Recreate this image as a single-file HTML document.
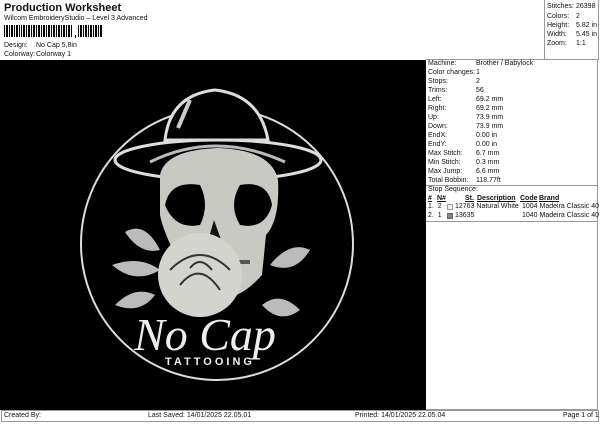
<!DOCTYPE html>
<html><head><meta charset="utf-8"><style>
*{margin:0;padding:0;box-sizing:border-box}
body{width:600px;height:424px;background:#fff;font-family:"Liberation Sans",sans-serif;color:#111;position:relative;overflow:hidden}
.a{position:absolute;white-space:nowrap;font-size:7px;line-height:8px}
#img{position:absolute;left:0;top:60px;width:426px;height:350px;background:#000}
#panel{position:absolute;left:426px;top:59px;width:172px;height:351px;border:1px solid #999;border-left:none}
#tr{position:absolute;left:544px;top:0;width:55px;height:60px;border-left:1px solid #999;border-right:1px solid #999}
.foot{position:absolute;left:1px;top:410px;width:598px;height:12px;border:1px solid #999}
u{text-decoration:underline;font-weight:bold}
</style></head><body>
<div class="a" style="left:4px;top:2px;font-size:11px;line-height:13px;font-weight:bold">Production Worksheet</div>
<div class="a" style="left:4px;top:15px">Wilcom EmbroideryStudio – Level 3 Advanced</div>
<svg style="position:absolute;left:4px;top:25px" width="100" height="14">
<g fill="#000">
<rect x="0" y="0" width="1" height="12"/><rect x="2" y="0" width="2" height="12"/><rect x="5" y="0" width="1" height="12"/><rect x="7" y="0" width="2" height="12"/><rect x="10" y="0" width="1" height="12"/><rect x="12" y="0" width="2" height="12"/><rect x="15" y="0" width="1" height="12"/><rect x="17" y="0" width="1" height="12"/><rect x="19" y="0" width="2" height="12"/><rect x="22" y="0" width="1" height="12"/><rect x="24" y="0" width="2" height="12"/><rect x="27" y="0" width="1" height="12"/><rect x="29" y="0" width="2" height="12"/><rect x="32" y="0" width="1" height="12"/><rect x="34" y="0" width="2" height="12"/><rect x="37" y="0" width="1" height="12"/><rect x="39" y="0" width="2" height="12"/><rect x="42" y="0" width="1" height="12"/><rect x="44" y="0" width="2" height="12"/><rect x="47" y="0" width="1" height="12"/><rect x="49" y="0" width="2" height="12"/><rect x="52" y="0" width="1" height="12"/><rect x="54" y="0" width="2" height="12"/><rect x="57" y="0" width="1" height="12"/><rect x="59" y="0" width="2" height="12"/><rect x="62" y="0" width="1" height="12"/><rect x="64" y="0" width="2" height="12"/><rect x="67" y="0" width="1" height="12"/><rect x="71" y="10" width="1" height="3"/><rect x="74" y="0" width="1" height="12"/><rect x="76" y="0" width="2" height="12"/><rect x="79" y="0" width="1" height="12"/><rect x="81" y="0" width="2" height="12"/><rect x="84" y="0" width="1" height="12"/><rect x="86" y="0" width="2" height="12"/><rect x="89" y="0" width="1" height="12"/><rect x="91" y="0" width="2" height="12"/><rect x="94" y="0" width="1" height="12"/><rect x="96" y="0" width="2" height="12"/>
</g></svg>
<div class="a" style="left:4px;top:42px">Design:</div><div class="a" style="left:36px;top:42px">No Cap 5,8in</div>
<div class="a" style="left:4px;top:51px">Colorway:</div><div class="a" style="left:36px;top:51px">Colorway 1</div>
<div id="tr"></div>
<div class="a" style="left:547px;top:3px">Stitches:</div><div class="a" style="left:576px;top:3px">26398</div>
<div class="a" style="left:547px;top:13px">Colors:</div><div class="a" style="left:576px;top:13px">2</div>
<div class="a" style="left:547px;top:22px">Height:</div><div class="a" style="left:576px;top:22px">5.82 in</div>
<div class="a" style="left:547px;top:31px">Width:</div><div class="a" style="left:576px;top:31px">5.45 in</div>
<div class="a" style="left:547px;top:40px">Zoom:</div><div class="a" style="left:576px;top:40px">1:1</div>
<div id="img">
<svg width="426" height="350" viewBox="0 60 426 350">
<circle cx="217" cy="244" r="136" fill="none" stroke="#ddd" stroke-width="2"/>
<!-- hat -->
<path d="M165 140 Q170 95 215 90 Q260 95 268 140 Z" fill="#000" stroke="#ddd" stroke-width="3"/>
<path d="M178 128 L190 100" stroke="#ccc" stroke-width="4"/>
<ellipse cx="218" cy="160" rx="103" ry="20" fill="none" stroke="#ddd" stroke-width="3"/>
<path d="M150 162 Q215 130 285 162" fill="none" stroke="#bbb" stroke-width="3"/>
<!-- skull -->
<path d="M160 175 Q165 150 218 148 Q272 150 278 180 Q280 220 266 235 L262 275 Q240 300 215 300 L190 280 Q165 240 160 215 Z" fill="#c9c9c4"/>
<path d="M165 205 Q170 180 200 185 Q210 205 200 225 Q175 230 165 205Z" fill="#000"/>
<path d="M272 205 Q268 180 240 185 Q228 205 240 225 Q265 230 272 205Z" fill="#000"/>
<path d="M214 220 L206 248 L224 248 Z" fill="#111"/>
<path d="M200 262 L250 262" stroke="#555" stroke-width="4"/>
<!-- leaves -->
<path d="M125 232 Q145 220 160 250 Q140 255 125 232Z" fill="#bbb"/>
<path d="M112 265 Q140 255 160 270 Q135 285 112 265Z" fill="#bbb"/>
<path d="M115 305 Q135 285 155 295 Q140 315 115 305Z" fill="#bbb"/>
<path d="M310 250 Q290 240 270 265 Q295 275 310 250Z" fill="#bbb"/>
<path d="M300 310 Q280 290 262 305 Q280 325 300 310Z" fill="#bbb"/>
<!-- rose -->
<circle cx="200" cy="275" r="42" fill="#d4d4cf"/>
<path d="M170 270 Q200 240 230 270 M180 285 Q200 260 220 290 M190 268 Q200 255 212 270" fill="none" stroke="#333" stroke-width="2"/>
<text x="205" y="350" text-anchor="middle" font-family="Liberation Serif,serif" font-style="italic" font-size="46" fill="#eee">No Cap</text>
<text x="210" y="365" text-anchor="middle" font-family="Liberation Sans,sans-serif" font-weight="bold" font-size="11" letter-spacing="3" fill="#eee">TATTOOING</text>
</svg>
</div>
<div id="panel"></div>
<div class="a" style="left:428px;top:60px">Machine:</div><div class="a" style="left:476px;top:60px">Brother / Babylock</div>
<div class="a" style="left:428px;top:69px">Color changes:</div><div class="a" style="left:476px;top:69px">1</div>
<div class="a" style="left:428px;top:78px">Stops:</div><div class="a" style="left:476px;top:78px">2</div>
<div class="a" style="left:428px;top:87px">Trims:</div><div class="a" style="left:476px;top:87px">56</div>
<div class="a" style="left:428px;top:96px">Left:</div><div class="a" style="left:476px;top:96px">69.2 mm</div>
<div class="a" style="left:428px;top:105px">Right:</div><div class="a" style="left:476px;top:105px">69.2 mm</div>
<div class="a" style="left:428px;top:114px">Up:</div><div class="a" style="left:476px;top:114px">73.9 mm</div>
<div class="a" style="left:428px;top:123px">Down:</div><div class="a" style="left:476px;top:123px">73.9 mm</div>
<div class="a" style="left:428px;top:132px">EndX:</div><div class="a" style="left:476px;top:132px">0.00 in</div>
<div class="a" style="left:428px;top:141px">EndY:</div><div class="a" style="left:476px;top:141px">0.00 in</div>
<div class="a" style="left:428px;top:150px">Max Stitch:</div><div class="a" style="left:476px;top:150px">6.7 mm</div>
<div class="a" style="left:428px;top:159px">Min Stitch:</div><div class="a" style="left:476px;top:159px">0.3 mm</div>
<div class="a" style="left:428px;top:168px">Max Jump:</div><div class="a" style="left:476px;top:168px">6.6 mm</div>
<div class="a" style="left:428px;top:177px">Total Bobbin:</div><div class="a" style="left:476px;top:177px">118.77ft</div>
<div style="position:absolute;left:426px;top:185px;width:172px;border-top:1px solid #999"></div>
<div class="a" style="left:428px;top:186px">Stop Sequence:</div>
<div class="a" style="left:428px;top:195px"><u>#</u></div><div class="a" style="left:437px;top:195px"><u>N#</u></div><div class="a" style="left:465px;top:195px"><u>St.</u></div><div class="a" style="left:477px;top:195px"><u>Description</u></div><div class="a" style="left:520px;top:195px"><u>Code</u></div><div class="a" style="left:539px;top:195px"><u>Brand</u></div>
<div class="a" style="left:428px;top:203px">1.&nbsp; 2</div><div style="position:absolute;left:447px;top:204px;width:6px;height:6px;border:1px solid #999;background:#f2f2f2"></div><div class="a" style="left:455px;top:203px">12763 Natural White</div><div class="a" style="left:522px;top:203px">1004 Madeira Classic 40</div>
<div class="a" style="left:428px;top:212px">2.&nbsp; 1</div><div style="position:absolute;left:447px;top:213px;width:6px;height:6px;border:1px solid #666;background:#888"></div><div class="a" style="left:455px;top:212px">13635</div><div class="a" style="left:522px;top:212px">1040 Madeira Classic 40</div>
<div style="position:absolute;left:426px;top:221px;width:172px;border-top:1px solid #999"></div>
<div class="foot"></div>
<div class="a" style="left:4px;top:412px">Created By:</div>
<div class="a" style="left:148px;top:412px">Last Saved: 14/01/2025 22.05.01</div>
<div class="a" style="left:355px;top:412px">Printed: 14/01/2025 22.05.04</div>
<div class="a" style="left:563px;top:412px">Page 1 of 1</div>
</body></html>
